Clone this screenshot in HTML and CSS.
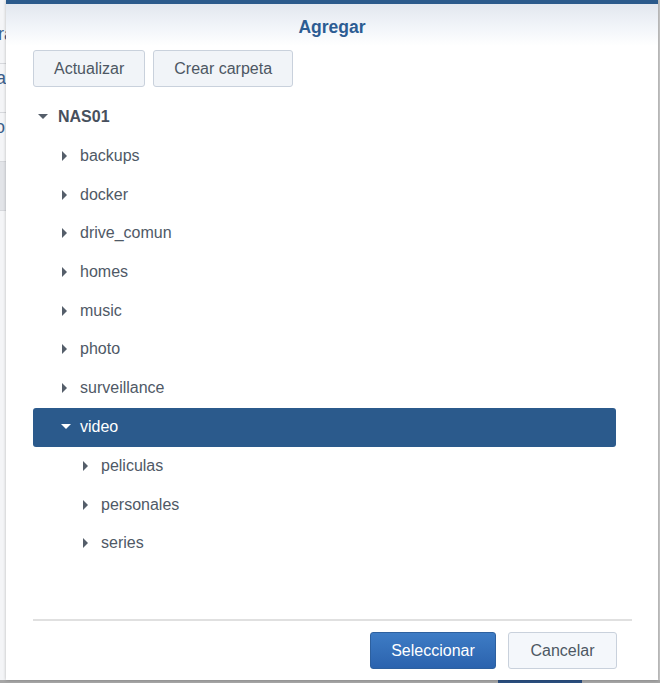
FILE: index.html
```html
<!DOCTYPE html>
<html lang="es">
<head>
    <meta charset="UTF-8">
    <meta name="viewport" content="width=device-width, initial-scale=1.0">
    <title>Agregar</title>
    <link rel="stylesheet" href="styles.css">
</head>
<body>
    <!-- aplicación de fondo, casi toda tapada por el diálogo -->
    <div class="backdrop">
        <div class="bg-row bg-first">Gra</div>
        <div class="bg-row">Par</div>
        <div class="bg-row">Vo</div>
        <div class="bg-row bg-sel">ti</div>
        <div class="bg-bottom"></div>
    </div>

    <div class="dialog">
        <div class="dialog-header">Agregar</div>

        <div class="toolbar">
            <button class="btn">Actualizar</button>
            <button class="btn">Crear carpeta</button>
        </div>

        <div class="tree">
            <div class="node level-0 bold"><span class="arrow down"></span>NAS01</div>
            <div class="node level-1"><span class="arrow right"></span>backups</div>
            <div class="node level-1"><span class="arrow right"></span>docker</div>
            <div class="node level-1"><span class="arrow right"></span>drive_comun</div>
            <div class="node level-1"><span class="arrow right"></span>homes</div>
            <div class="node level-1"><span class="arrow right"></span>music</div>
            <div class="node level-1"><span class="arrow right"></span>photo</div>
            <div class="node level-1"><span class="arrow right"></span>surveillance</div>
            <div class="node level-1 selected"><span class="arrow down"></span>video</div>
            <div class="node level-2"><span class="arrow right"></span>peliculas</div>
            <div class="node level-2"><span class="arrow right"></span>personales</div>
            <div class="node level-2"><span class="arrow right"></span>series</div>
        </div>

        <div class="footer">
            <button class="btn btn-primary">Seleccionar</button>
            <button class="btn btn-cancel">Cancelar</button>
        </div>
    </div>
</body>
</html>
```

FILE: styles.css
```css
html, body {
    margin: 0;
    padding: 0;
}
body {
    width: 660px;
    height: 683px;
    position: relative;
    overflow: hidden;
    background-color: #f4f5f7;
    font-family: "Liberation Sans", Arial, sans-serif;
}

/* fondo */
.backdrop {
    height: 683px;
    padding-top: 22px;
    box-sizing: border-box;
    border-right: 2px solid #c9c9c9;
}
.bg-row {
    height: 49px;
    line-height: 20px;
    padding-top: 4px;
    box-sizing: border-box;
    font-size: 18px;
    color: #3b5f8a;
    text-indent: -16px;
    border-bottom: 1px solid #d6d8dc;
}
.bg-first {
    height: 42px;
    padding-top: 2px;
}
.bg-sel {
    background-color: #e2e4e8;
}
.bg-bottom {
    position: absolute;
    left: 0;
    right: 0;
    bottom: 0;
    height: 3px;
    background: linear-gradient(90deg, #a6a6a6 0, #a6a6a6 498px, #2b4f80 498px, #2b4f80 582px, #a6a6a6 582px);
}

/* diálogo */
.dialog {
    position: absolute;
    left: 6px;
    top: 0;
    width: 652px;
    height: 680px;
    background-color: #fff;
    display: flex;
    flex-direction: column;
    box-shadow: 0 0 3px rgba(0,0,0,0.25);
}
.dialog-header {
    height: 46px;
    box-sizing: border-box;
    border-top: 4px solid #2b5a8c;
    background: linear-gradient(#e2e7ef, #f3f6fa 60%, #fff);
    color: #2c5c93;
    font-size: 17.5px;
    font-weight: bold;
    text-align: center;
    line-height: 47px;
}
.toolbar {
    display: flex;
    gap: 8px;
    padding: 4px 27px 0;
}
.btn {
    height: 37px;
    padding: 0 20px;
    border: 1px solid #c9d1dc;
    border-radius: 3px;
    background-color: #f1f4f8;
    color: #4d5763;
    font-family: "Liberation Sans", Arial, sans-serif;
    font-size: 16px;
    cursor: pointer;
}
.btn-primary {
    width: 126px;
    padding: 0;
    background: linear-gradient(#3e7cc5, #2b63ae);
    border-color: #2d609f;
    color: #fff;
}
.btn-cancel {
    width: 109px;
    padding: 0;
    background-color: #f4f7fb;
}

/* árbol */
.tree {
    flex: 1;
    margin: 11px 42px 0 27px;
}
.node {
    height: 38.7px;
    display: flex;
    align-items: center;
    font-size: 16px;
    color: #4f5966;
    border-radius: 3px;
}
.node.bold {
    font-weight: bold;
    color: #47505d;
}
.level-1 {
    padding-left: 22px;
}
.level-2 {
    padding-left: 43px;
}
.node.selected {
    height: 39px;
    background-color: #2b5a8c;
    color: #fff;
}
.arrow {
    width: 20px;
    height: 10px;
    margin-right: 5px;
    position: relative;
    flex: none;
}
.arrow::after {
    content: "";
    position: absolute;
    width: 0;
    height: 0;
}
.arrow.down::after {
    left: 5px;
    top: 2px;
    border-left: 5px solid transparent;
    border-right: 5px solid transparent;
    border-top: 5px solid #555e6a;
}
.arrow.right::after {
    left: 7px;
    top: 0;
    border-top: 5px solid transparent;
    border-bottom: 5px solid transparent;
    border-left: 5px solid #555e6a;
}
.selected .arrow.down::after {
    left: 6px;
    border-top-color: #fff;
}

/* pie */
.footer {
    display: flex;
    justify-content: flex-end;
    gap: 12px;
    margin: 0 26px 0 27px;
    padding: 11px 15px 11px 0;
    border-top: 2px solid #e0e0e0;
}
```
